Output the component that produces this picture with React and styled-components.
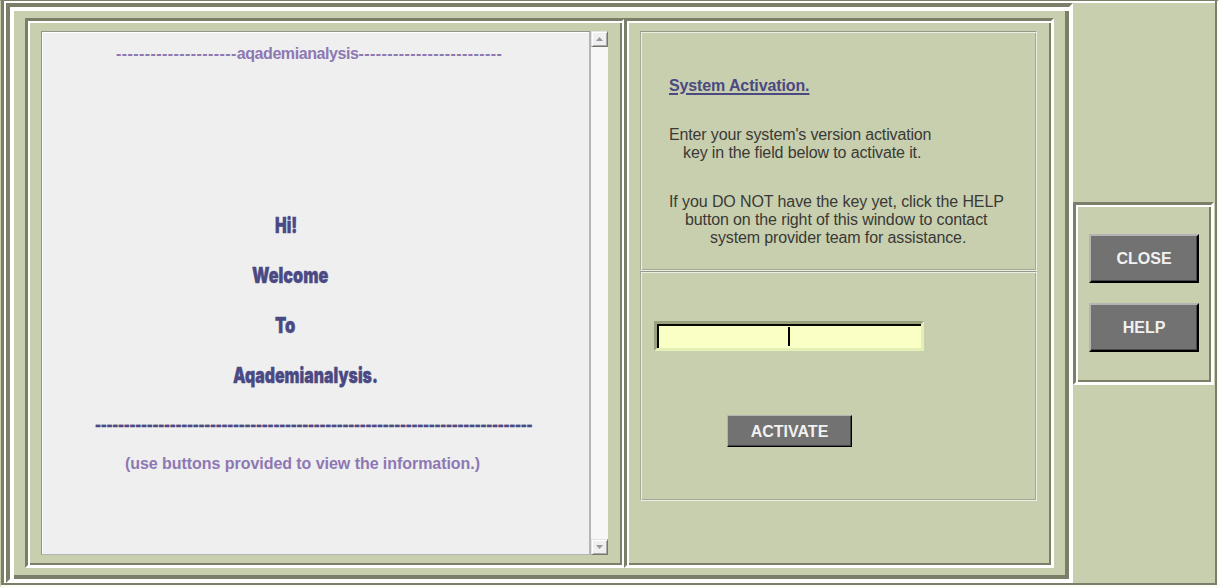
import React from 'react';
import styled, { createGlobalStyle } from 'styled-components';

const bg = '#c8cfae';
const dark = '#7b7e69';

const Global = createGlobalStyle`
  * { box-sizing: border-box; }
  body { margin: 0; background: #fdfdf8; overflow: hidden; font-family: "Liberation Sans", Arial, sans-serif; }
`;

const Window = styled.main`
  display: flex;
  width: 1219px;
  height: 588px;
  border-style: solid;
  border-width: 1px 2px 3px 1px;
  border-color: ${dark} #fdfdf8 #fdfdf8 ${bg};
`;

const Rim = styled.div`
  display: flex;
  width: 100%;
  background: ${bg};
  border-left: 3px solid ${dark};
  border-right: 2px solid ${dark};
  border-bottom: 2px solid ${dark};
  box-shadow: inset 2px 2px 0 #fff;
  padding: 2px 0 0 2px;
`;

const Groove = styled.section`
  border: ${p => p.$outer}px solid;
  border-color: ${dark} #fff #fff ${dark};
  box-shadow: inset ${p => p.$inner}px ${p => p.$inner}px 0 #fff, inset -${p => p.$inner}px -${p => p.$inner}px 0 ${dark};
`;

const Main = styled(Groove)`
  display: flex;
  width: 1067px;
  height: 580px;
  padding: 11px 15px;
`;

const InfoPanel = styled(Groove)`
  display: flex;
  width: 600px;
  height: 550px;
  padding: 10px 13px;
`;

const FormPanel = styled(Groove)`
  width: 430px;
  height: 550px;
  padding: 10px 13px;
  margin-left: -1px;
`;

const Notes = styled.div`
  width: 550px;
  height: 524px;
  background: #efefef;
  border: 1px solid #92958a;
  border-right: 2px solid #b5b5b8;
  border-bottom-color: #b3b4b2;
  box-shadow: inset 1px 1px 0 #fff;
  padding-top: 13px;
`;

const Line = styled.div`
  height: ${p => p.$h || 18}px;
  line-height: ${p => p.$h || 18}px;
  margin: ${p => p.$top || 0}px 0 0 ${p => p.$left || 0}px;
  font-size: ${p => p.$size || 16}px;
  font-weight: ${p => (p.$bold ? 700 : 400)};
  letter-spacing: ${p => p.$track ?? -0.12}px;
  color: ${p => p.$color || '#3a3936'};
  text-decoration: ${p => (p.$link ? 'underline' : 'none')};
  text-decoration-thickness: 2px;
  text-underline-offset: 2px;
  white-space: pre;
`;

const Rule = styled(Line)`
  -webkit-text-stroke: 0.25px #4b4983;
`;

const Name = styled.span`
  letter-spacing: -0.42px;
`;

const Headline = styled.div`
  height: 26px;
  line-height: 26px;
  margin: 0 0 24px ${p => p.$left}px;
  font-family: Inter, "Liberation Sans", sans-serif;
  font-weight: 900;
  font-size: 22px;
  color: #4b4983;
  -webkit-text-stroke: 0.4px #4b4983;
  white-space: pre;
  transform: scaleX(${p => p.$scale});
  transform-origin: left;
`;

const Scroll = styled.div`
  display: flex;
  flex-direction: column;
  justify-content: space-between;
  width: 17px;
  height: 524px;
  background: #f7f7f7;
`;

const ScrollButton = styled.div`
  display: flex;
  align-items: center;
  justify-content: center;
  width: 17px;
  height: 16px;
  background: #efefef;
  border: 1px solid;
  border-color: #e4e4e4 #77776f #77776f #e4e4e4;
  box-shadow: inset 1px 1px 0 #fff, inset -1px -1px 0 #aaa;
`;

const Group = styled.section`
  width: 397px;
  height: ${p => p.$h}px;
  border: 1px solid;
  border-color: #92988a #eceee4 #eceee4 #a5ab98;
  box-shadow: inset 1px 1px 0 #eceee4, inset -1px -1px 0 #a3a894;
  padding: ${p => p.$pad};
`;

const KeyField = styled.div`
  display: flex;
  justify-content: center;
  width: 270px;
  height: 30px;
  padding-top: 1px;
  background: #faffc5;
  border: 3px solid;
  border-color: #98a07c #e3efb5 #e3efb5 #98a07c;
  box-shadow: inset 2px 2px 0 #080800;
`;

const Caret = styled.span`
  width: 2px;
  height: 19px;
  margin: 2px 1px 0 0;
  background: #000;
`;

const Button = styled.button`
  display: block;
  width: ${p => p.$w}px;
  height: ${p => p.$h}px;
  margin: ${p => p.$m || '0'};
  padding: ${p => p.$drop || 0}px 0 0;
  border: ${p => p.$b}px solid;
  border-color: #b4b4b4 #000 #000 #b4b4b4;
  border-radius: 0;
  box-shadow: inset -1px -1px 0 #464646;
  background: #727272;
  color: #f1f1f1;
  font: 700 16px "Liberation Sans", Arial, sans-serif;
`;

const Side = styled.aside`
  padding-top: 199px;
`;

const SidePanel = styled(Groove)`
  width: 141px;
  height: 183px;
  padding: 29px 13px;
`;

const Arrow = ({ down }) => (
  <svg width="7" height="4" viewBox="0 0 7 4">
    <path d={down ? 'M0 0H7L3.5 4Z' : 'M0 4H7L3.5 0Z'} fill="#999" />
  </svg>
);

export default function App() {
  return (
    <>
      <Global />
      <Window>
        <Rim>
          <Main $outer={4} $inner={4}>
            <InfoPanel $outer={3} $inner={2}>
              <Notes>
                <Line $left={74} $bold $track={0.42} $color="#8d78b4">
                  {'-'.repeat(21)}<Name>aqademianalysis</Name>{'-'.repeat(25)}
                </Line>
                <Line $h={149} />
                <Headline $left={233} $scale={0.71}>Hi!</Headline>
                <Headline $left={210} $scale={0.735}>Welcome</Headline>
                <Headline $left={233} $scale={0.75}>To</Headline>
                <Headline $left={191} $scale={0.722}>Aqademianalysis.</Headline>
                <Rule $left={53} $top={28} $bold $size={18} $track={-0.24} $color="#4b4983">{'-'.repeat(76)}</Rule>
                <Line $left={83} $top={21} $bold $track={-0.05} $color="#8d78b4">(use buttons provided to view the information.)</Line>
              </Notes>
              <Scroll>
                <ScrollButton><Arrow /></ScrollButton>
                <ScrollButton><Arrow down /></ScrollButton>
              </Scroll>
            </InfoPanel>
            <FormPanel $outer={3} $inner={2}>
              <Group $h={240} $pad="45px 0 0 28px">
                <Line $bold $link $color="#4b4983">System Activation.</Line>
                <Line $top={31} $track={-0.15}>Enter your system's version activation</Line>
                <Line $left={14}>key in the field below to activate it.</Line>
                <Line $top={31} $track={-0.1}>If you DO NOT have the key yet, click the HELP</Line>
                <Line $left={16}>button on the right of this window to contact</Line>
                <Line $left={41}>system provider team for assistance.</Line>
              </Group>
              <Group $h={230} $pad="49px 0 0 13px">
                <KeyField><Caret /></KeyField>
                <Button $w={125} $h={32} $b={1} $drop={2} $m="64px 0 0 73px">ACTIVATE</Button>
              </Group>
            </FormPanel>
          </Main>
          <Side>
            <SidePanel $outer={3} $inner={2}>
              <Button $w={110} $h={49} $b={2}>CLOSE</Button>
              <Button $w={110} $h={49} $b={2} $m="20px 0 0">HELP</Button>
            </SidePanel>
          </Side>
        </Rim>
      </Window>
    </>
  );
}
